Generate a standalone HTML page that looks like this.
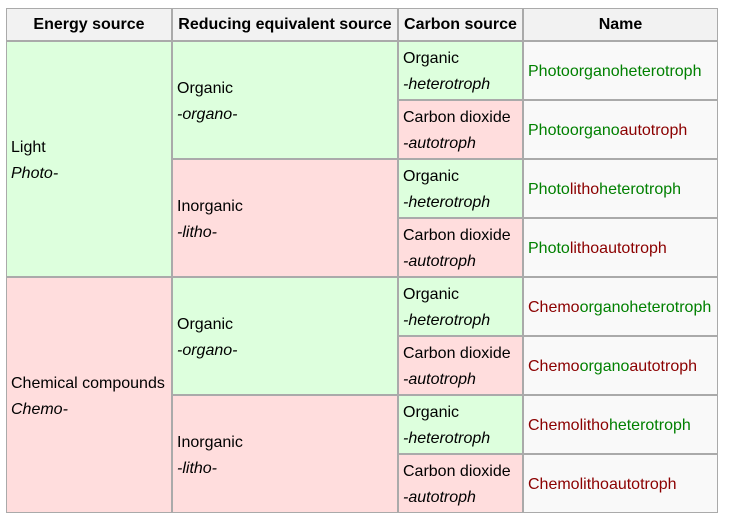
<!DOCTYPE html>
<html><head><meta charset="utf-8"><style>
body{margin:0;background:#fff;font-family:"Liberation Sans",Arial,sans-serif;font-size:16px;color:#000;}
.c{position:absolute;box-sizing:border-box;border:1px solid #aaa;display:flex;flex-direction:column;justify-content:center;padding:3px 4px 0 4px;line-height:26px;white-space:nowrap;}
.h{background:#f2f2f2;font-weight:bold;align-items:center;padding-top:1px}
.g{background:#ddffdd}.r{background:#ffdddd}.n{background:#f9f9f9}
i{font-style:italic}
.G{color:#008000}.R{color:#8b0000}
</style></head><body>
<div class="c h" style="left:6px;top:8px;width:166px;height:33px">Energy source</div>
<div class="c h" style="left:172px;top:8px;width:226px;height:33px">Reducing equivalent source</div>
<div class="c h" style="left:398px;top:8px;width:125px;height:33px">Carbon source</div>
<div class="c h" style="left:523px;top:8px;width:195px;height:33px">Name</div>

<div class="c g" style="left:6px;top:41px;width:166px;height:236px"><span>Light</span><i>Photo-</i></div>
<div class="c r" style="left:6px;top:277px;width:166px;height:236px"><span>Chemical compounds</span><i>Chemo-</i></div>

<div class="c g" style="left:172px;top:41px;width:226px;height:118px"><span>Organic</span><i>-organo-</i></div>
<div class="c r" style="left:172px;top:159px;width:226px;height:118px"><span>Inorganic</span><i>-litho-</i></div>
<div class="c g" style="left:172px;top:277px;width:226px;height:118px"><span>Organic</span><i>-organo-</i></div>
<div class="c r" style="left:172px;top:395px;width:226px;height:118px"><span>Inorganic</span><i>-litho-</i></div>

<div class="c g" style="left:398px;top:41px;width:125px;height:59px"><span>Organic</span><i>-heterotroph</i></div>
<div class="c r" style="left:398px;top:100px;width:125px;height:59px"><span>Carbon dioxide</span><i>-autotroph</i></div>
<div class="c g" style="left:398px;top:159px;width:125px;height:59px"><span>Organic</span><i>-heterotroph</i></div>
<div class="c r" style="left:398px;top:218px;width:125px;height:59px"><span>Carbon dioxide</span><i>-autotroph</i></div>
<div class="c g" style="left:398px;top:277px;width:125px;height:59px"><span>Organic</span><i>-heterotroph</i></div>
<div class="c r" style="left:398px;top:336px;width:125px;height:59px"><span>Carbon dioxide</span><i>-autotroph</i></div>
<div class="c g" style="left:398px;top:395px;width:125px;height:59px"><span>Organic</span><i>-heterotroph</i></div>
<div class="c r" style="left:398px;top:454px;width:125px;height:59px"><span>Carbon dioxide</span><i>-autotroph</i></div>

<div class="c n" style="left:523px;top:41px;width:195px;height:59px"><span><span class="G">Photo</span><span class="G">organo</span><span class="G">heterotroph</span></span></div>
<div class="c n" style="left:523px;top:100px;width:195px;height:59px"><span><span class="G">Photo</span><span class="G">organo</span><span class="R">autotroph</span></span></div>
<div class="c n" style="left:523px;top:159px;width:195px;height:59px"><span><span class="G">Photo</span><span class="R">litho</span><span class="G">heterotroph</span></span></div>
<div class="c n" style="left:523px;top:218px;width:195px;height:59px"><span><span class="G">Photo</span><span class="R">litho</span><span class="R">autotroph</span></span></div>
<div class="c n" style="left:523px;top:277px;width:195px;height:59px"><span><span class="R">Chemo</span><span class="G">organo</span><span class="G">heterotroph</span></span></div>
<div class="c n" style="left:523px;top:336px;width:195px;height:59px"><span><span class="R">Chemo</span><span class="G">organo</span><span class="R">autotroph</span></span></div>
<div class="c n" style="left:523px;top:395px;width:195px;height:59px"><span><span class="R">Chemo</span><span class="R">litho</span><span class="G">heterotroph</span></span></div>
<div class="c n" style="left:523px;top:454px;width:195px;height:59px"><span><span class="R">Chemo</span><span class="R">litho</span><span class="R">autotroph</span></span></div>
</body></html>
